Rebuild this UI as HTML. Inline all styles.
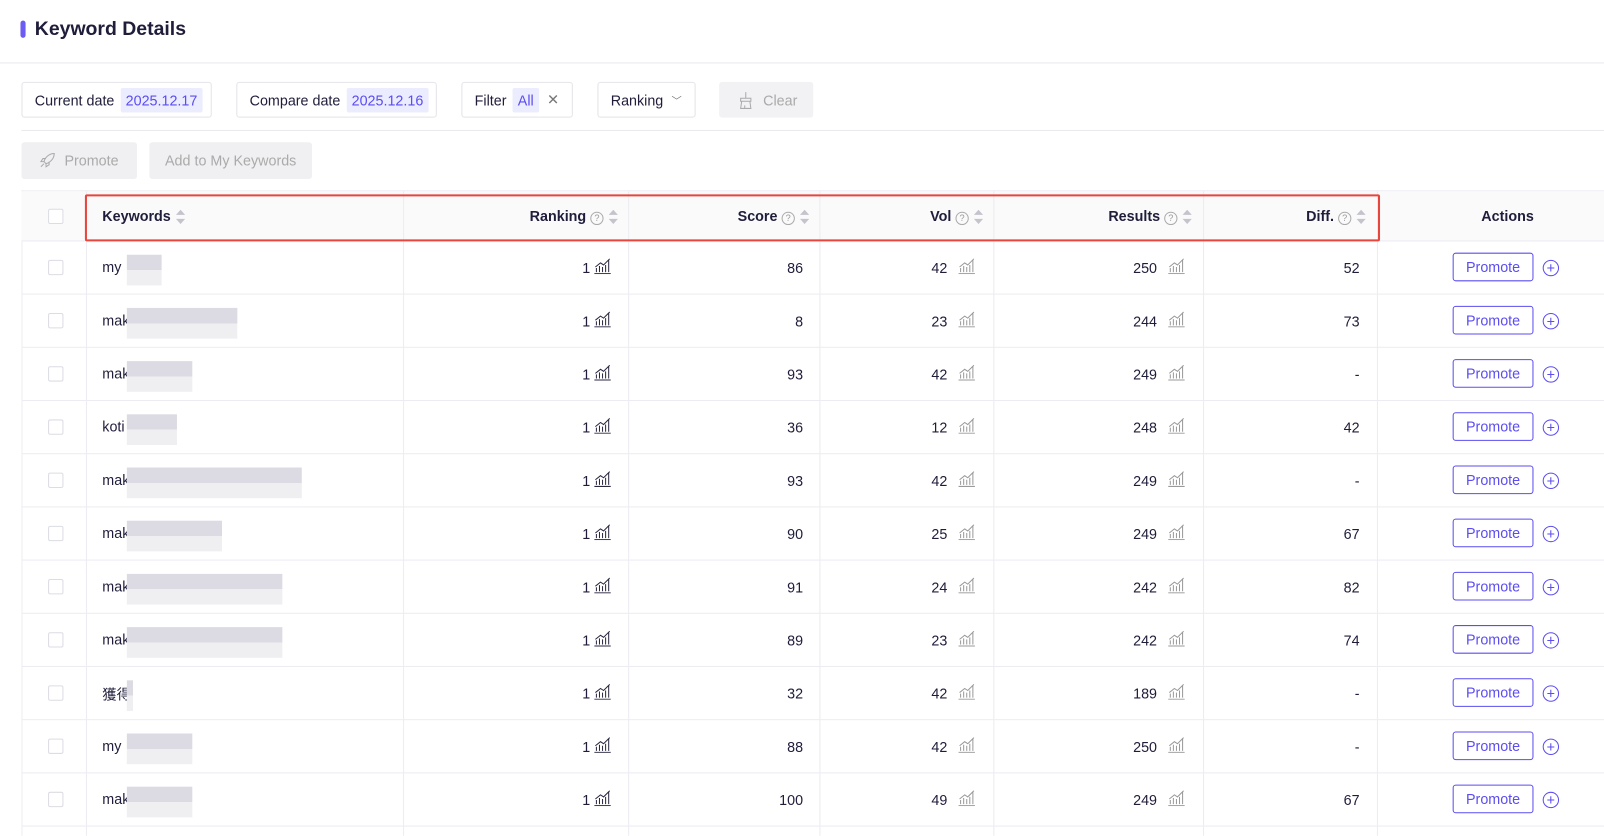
<!DOCTYPE html><html><head><style>
body{margin:0;width:1604px;height:817px;overflow:hidden;background:#fff;font-family:"Liberation Sans","Noto Sans CJK SC",sans-serif;color:#1f1d3a;font-size:14px;position:relative}
#w{position:absolute;left:0;top:0;width:1568px;height:800px;transform:scale(1.023);transform-origin:0 0}
.a{position:absolute;white-space:nowrap}
.box{position:absolute;top:80px;height:35px;border:1px solid #e4e4ea;border-radius:3px;box-sizing:border-box;display:flex;align-items:center;padding:0 12px;font-size:14px;white-space:nowrap}
.tag{background:#ececff;color:#5b4df0;padding:4px 5px;margin-left:6px;border-radius:2px}
.hd{position:absolute;top:187px;height:49px;background:#fafafb;border-bottom:1px solid #ececf2;box-sizing:border-box}
.vl{position:absolute;width:1px;background:#ececf2}
.row{position:absolute;left:21px;width:1583px;height:52px;border-bottom:1px solid #ececf2;box-sizing:border-box}
.c{position:absolute;top:0;height:51px;display:flex;align-items:center;justify-content:flex-end}
.cb{position:absolute;left:26px;top:18px;width:13px;height:13px;border:1px solid #dcdce4;border-radius:2px}
.pb{position:absolute;left:1399px;top:11px;width:79px;height:28px;border:1px solid #5b4df0;border-radius:3px;color:#5b4df0;display:flex;align-items:center;justify-content:center;box-sizing:border-box}
.q{display:inline-block;width:11px;height:11px;border:1px solid #aaa;border-radius:50%;font-size:9px;color:#999;text-align:center;line-height:11px;margin-left:4px;font-weight:normal}
.s{display:inline-block;margin-left:5px;width:9px;vertical-align:middle}
</style></head><body><div id="w">
<div class="a" style="left:20px;top:20px;width:5px;height:17px;background:#6c5cf5;border-radius:3px"></div>
<div class="a" style="left:34px;top:18px;font-size:19px;font-weight:bold">Keyword Details</div>
<div class="a" style="left:0;top:61px;width:1604px;height:1px;background:#e8e8ee"></div>
<div class="box" style="left:21px;width:186px">Current date<span class="tag">2025.12.17</span></div>
<div class="box" style="left:231px;width:196px">Compare date<span class="tag">2025.12.16</span></div>
<div class="box" style="left:451px;width:109px">Filter<span class="tag">All</span><span style="margin-left:8px;color:#777">✕</span></div>
<div class="box" style="left:584px;width:96px">Ranking<span style="margin-left:8px;color:#777;font-size:10px">﹀</span></div>
<div class="box" style="left:703px;width:92px;background:#f2f2f4;border-color:#f2f2f4;color:#aaa;padding-left:16px"><svg width="18" height="18" viewBox="0 0 18 18" fill="none" stroke="#aaa"><path d="M9 1v6M4 7h10v3H4zM5 10l-1 7h10l-1-7M8 17v-3"/></svg><span style="margin-left:8px">Clear</span></div>
<div class="a" style="left:21px;top:127px;width:1583px;height:1px;background:#e8e8ee"></div>
<div class="a" style="left:21px;top:139px;width:113px;height:36px;background:#f0f0f2;border-radius:3px;color:#aaa;display:flex;align-items:center;padding-left:16px;box-sizing:border-box"><svg width="18" height="18" viewBox="0 0 18 18" fill="none" stroke="#aaa"><path d="M16 2C11 2 7 6 6 10l2 2c4-1 8-5 8-10zM6 10l-3 0 2-3h3M8 12v3l3-2v-3M3 15l3-3"/></svg><span style="margin-left:8px">Promote</span></div>
<div class="a" style="left:146px;top:139px;width:159px;height:36px;background:#f0f0f2;border-radius:3px;color:#aaa;display:flex;align-items:center;justify-content:center">Add to My Keywords</div>
<div class="a" style="left:21px;top:186px;width:1583px;height:1px;background:#ececf2"></div>
<div class="a" style="left:21px;top:186px;width:1px;height:631px;background:#ececf2"></div>
<div class="hd" style="left:21px;width:1583px"></div>
<div class="a" style="left:47px;top:204px;width:13px;height:13px;border:1px solid #dcdce4;border-radius:2px;background:#fff"></div>
<div class="a" style="left:100px;top:203px;font-weight:bold">Keywords<svg class="s" height="14" viewBox="0 0 9 14"><path d="M0 5l4.5-5 4.5 5zM0 9l4.5 5 4.5-5z" fill="#c4c4cc"/></svg></div>
<div class="a" style="right:964px;top:203px;font-weight:bold">Ranking<span class="q">?</span><svg class="s" height="14" viewBox="0 0 9 14"><path d="M0 5l4.5-5 4.5 5zM0 9l4.5 5 4.5-5z" fill="#c4c4cc"/></svg></div>
<div class="a" style="right:777px;top:203px;font-weight:bold">Score<span class="q">?</span><svg class="s" height="14" viewBox="0 0 9 14"><path d="M0 5l4.5-5 4.5 5zM0 9l4.5 5 4.5-5z" fill="#c4c4cc"/></svg></div>
<div class="a" style="right:607px;top:203px;font-weight:bold">Vol<span class="q">?</span><svg class="s" height="14" viewBox="0 0 9 14"><path d="M0 5l4.5-5 4.5 5zM0 9l4.5 5 4.5-5z" fill="#c4c4cc"/></svg></div>
<div class="a" style="right:403px;top:203px;font-weight:bold">Results<span class="q">?</span><svg class="s" height="14" viewBox="0 0 9 14"><path d="M0 5l4.5-5 4.5 5zM0 9l4.5 5 4.5-5z" fill="#c4c4cc"/></svg></div>
<div class="a" style="right:233px;top:203px;font-weight:bold">Diff.<span class="q">?</span><svg class="s" height="14" viewBox="0 0 9 14"><path d="M0 5l4.5-5 4.5 5zM0 9l4.5 5 4.5-5z" fill="#c4c4cc"/></svg></div>
<div class="a" style="left:1448px;top:203px;font-weight:bold">Actions</div>
<div class="vl" style="left:84px;top:187px;height:630px"></div>
<div class="vl" style="left:394px;top:187px;height:630px"></div>
<div class="vl" style="left:614px;top:187px;height:630px"></div>
<div class="vl" style="left:801px;top:187px;height:630px"></div>
<div class="vl" style="left:971px;top:187px;height:630px"></div>
<div class="vl" style="left:1176px;top:187px;height:630px"></div>
<div class="vl" style="left:1346px;top:187px;height:630px"></div>
<div id="rows"></div>
<div class="a" style="left:83px;top:190px;width:1266px;height:46px;border:2px solid #e8453c;border-radius:2px;box-sizing:border-box"></div>
</div>
<script>
var d=[["my",158,86,42,250,52],["mak",232,8,23,244,73],["mak",188,93,42,249,"-"],["koti",173,36,12,248,42],["mak",295,93,42,249,"-"],["mak",217,90,25,249,67],["mak",276,91,24,242,82],["mak",276,89,23,242,74],["獲得",130,32,42,189,"-"],["my",188,88,42,250,"-"],["mak",188,100,49,249,67]];
function ic(c){return '<svg width="18" height="16" viewBox="0 0 18 16" fill="none" stroke="'+c+'" stroke-width="1"><path d="M1 15.5h16M3 14v-4M6 14v-6M9 14v-5M12 14v-7M15 14V2M2 9l5-4 3 2 6-6"/></svg>';}
var h='';d.forEach(function(r,i){var t=236+i*52;var lt=124;
h+='<div class="row" style="top:'+t+'px"><div class="cb"></div>'+
'<div class="a" style="left:79px;top:17px">'+r[0]+'</div>'+
'<div class="a" style="left:'+(lt-21)+'px;top:13px;width:'+(r[1]-lt)+'px;height:30px;background:linear-gradient(#dcdbe3 0 50%,#efeff2 50%)"></div>'+
'<div class="c" style="right:1006px">1 <span style="margin-left:3px">'+ic('#2a2840')+'</span></div>'+
'<div class="c" style="right:819px">'+r[2]+'</div>'+
'<div class="c" style="right:650px">'+r[3]+'<span style="margin-left:10px">'+ic('#999')+'</span></div>'+
'<div class="c" style="right:445px">'+r[4]+'<span style="margin-left:10px">'+ic('#999')+'</span></div>'+
'<div class="c" style="right:275px">'+r[5]+'</div>'+
'<div class="pb">Promote</div><div class="a" style="left:1487px;top:18px;width:14px;height:14px;border:1px solid #5b4df0;border-radius:50%;color:#5b4df0;font-size:14px;line-height:14px;text-align:center">+</div></div>';});
document.getElementById('rows').innerHTML=h;
</script>
</body></html>
